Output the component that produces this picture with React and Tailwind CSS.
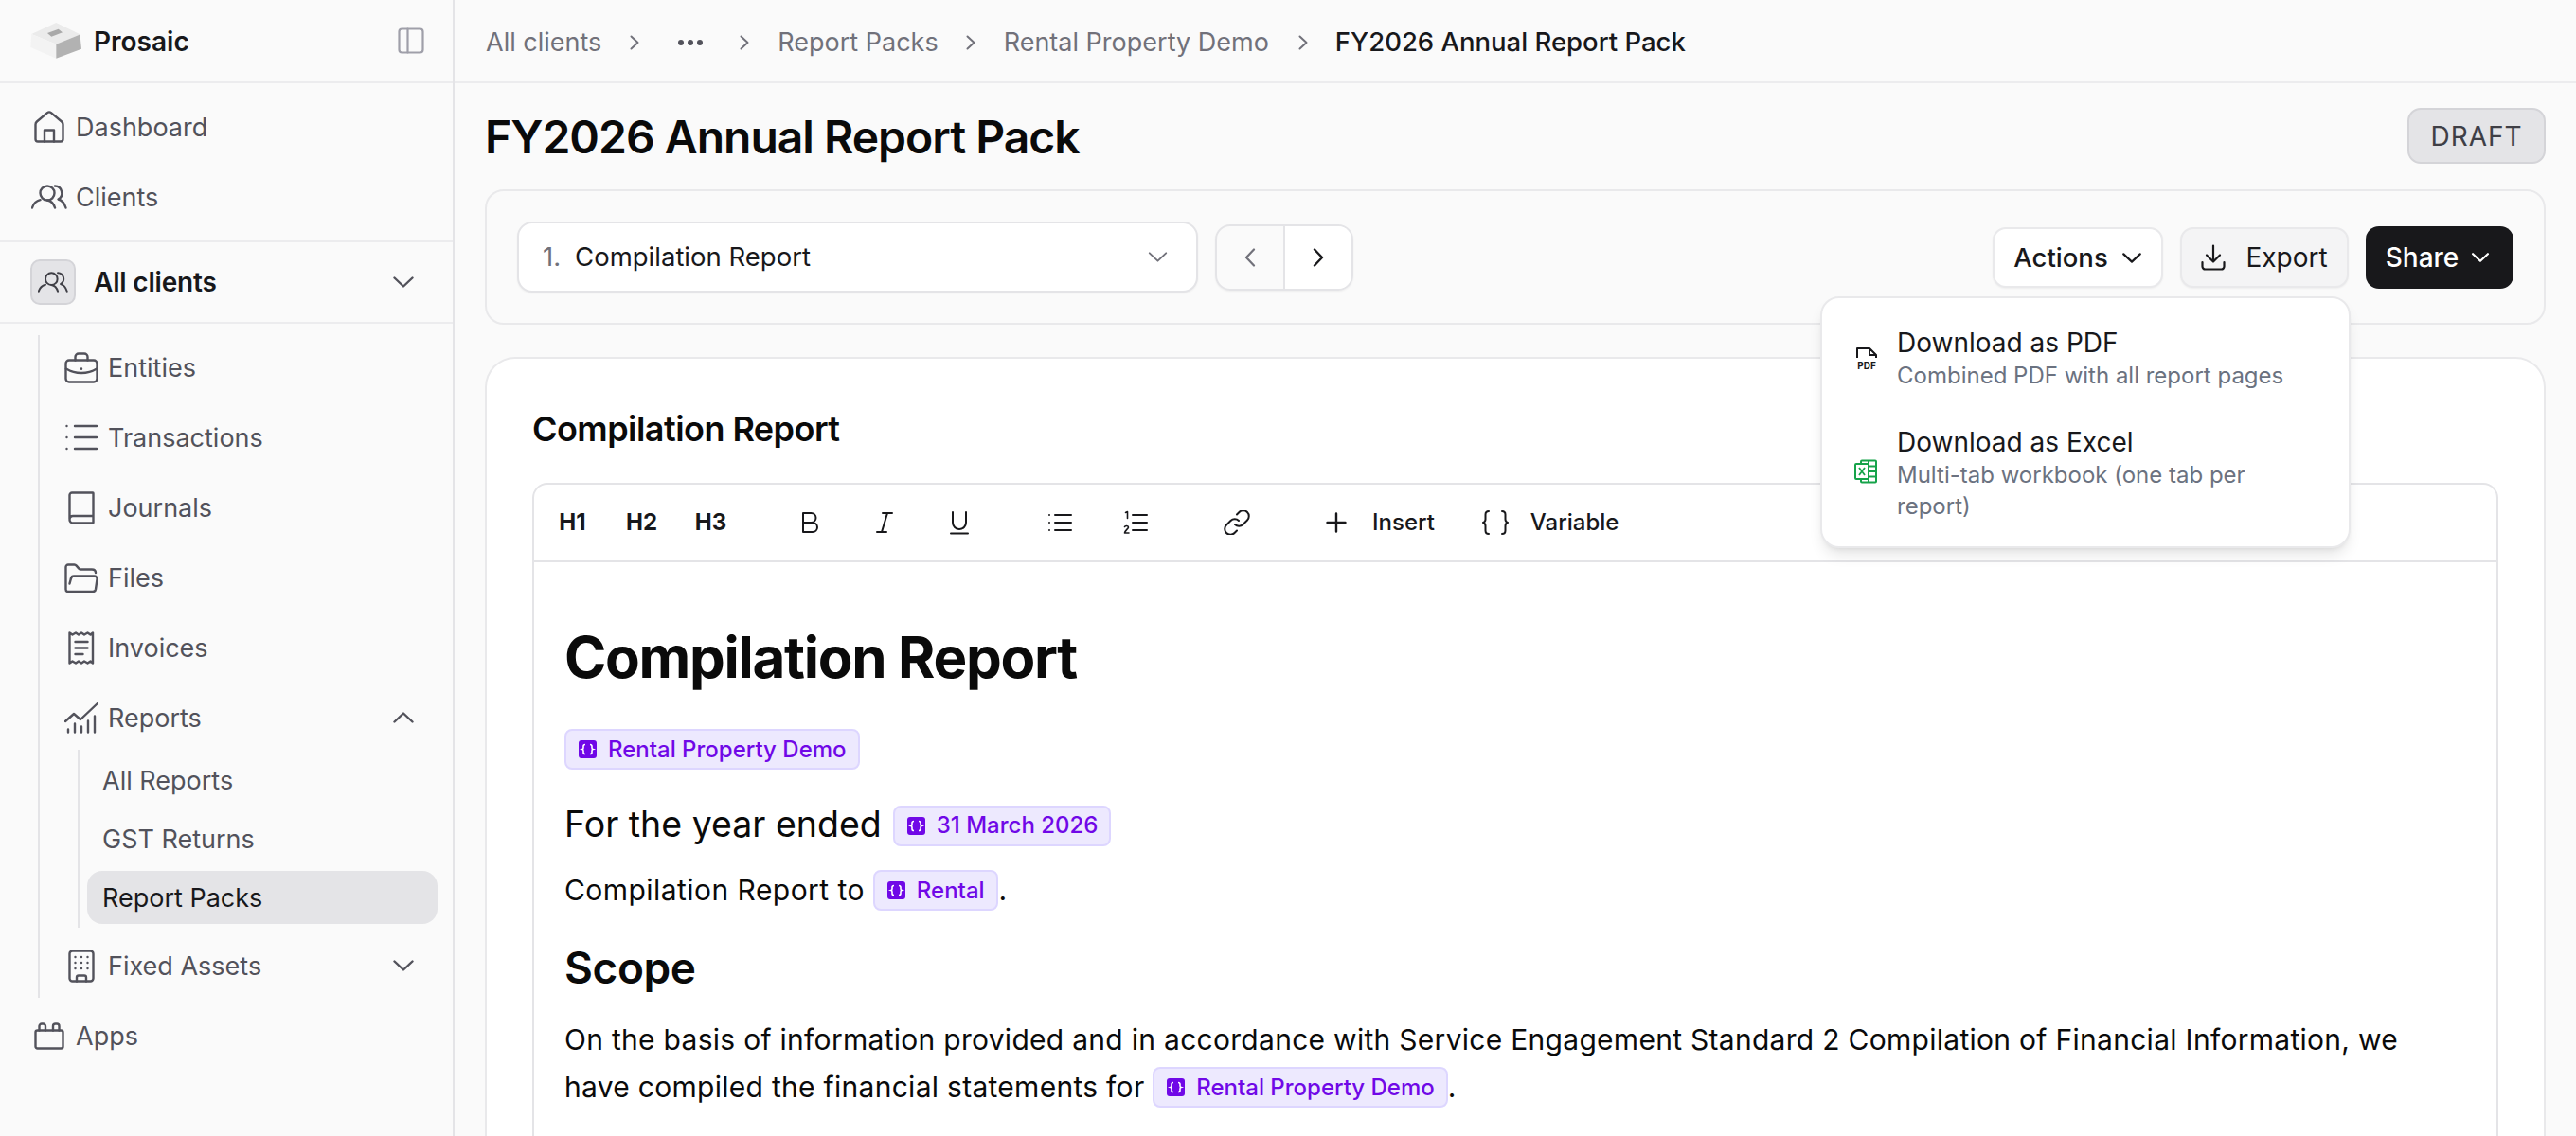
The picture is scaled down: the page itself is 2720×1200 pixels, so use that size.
const Ic = ({ w = 32, h = 32, sw = 2.4, children, className = '' }) => (
  <svg width={w} height={h} viewBox={`0 0 ${w} ${h}`} fill="none" stroke="currentColor" strokeWidth={sw} strokeLinecap="round" strokeLinejoin="round" className={`shrink-0 ${className}`}>
    {children}
  </svg>
);

const Logo = () => (
  <svg width="54" height="38" viewBox="0 0 54 38" className="shrink-0">
    <polygon points="27.3,0 1.3,12 27.3,22.7 53,12.5" fill="#ebebeb" />
    <polygon points="1.3,12 0.3,26 27.3,37.7 27.3,22.7" fill="#f3f3f3" />
    <polygon points="27.3,22.7 27.3,37.7 54,27.7 52.5,12.5" fill="#b2b2b2" />
    <polygon points="18,11 29.7,6.7 34,10.3 22.3,14.7" fill="#a9a9a9" />
  </svg>
);

const PanelIcon = () => (
  <Ic w={28} h={28} sw={2.2} className="text-zinc-400">
    <rect x="1.5" y="1.5" width="25" height="25" rx="3" />
    <path d="M10.5 1.5v25" />
  </Ic>
);

const HomeIcon = () => (
  <Ic w={32} h={34}>
    <path d="M1.5 14.5c0-1.2.5-2.2 1.4-3L14 2.200c1.200-1 2.800-1 4 0l11.100 9.300c.9.800 1.400 1.800 1.400 3V30a2.500 2.500 0 0 1-2.500 2.500H4A2.500 2.500 0 0 1 1.500 30z" />
    <path d="M11 32.500V20.500h10v12" />
  </Ic>
);

const UsersIcon = ({ w = 38, h = 26, sw = 2.4 }) => (
  <svg width={w} height={h} viewBox="0 0 38 26" fill="none" stroke="currentColor" strokeWidth={sw * (38 / w)} strokeLinecap="round" strokeLinejoin="round" className="shrink-0">
    <circle cx="17" cy="9" r="7.500" />
    <path d="M1 24.500c1.500-5 5-7.500 8.500-8.300M25 24.500c-1.500-5-5-7.500-8-8" />
    <path d="M25 1.500a7.500 7.500 0 0 1 3.500 14c3.500 1 6.500 4 8 9" />
  </svg>
);

const BriefcaseIcon = () => (
  <Ic w={36} h={33}>
    <rect x="1.500" y="8.500" width="33" height="23" rx="3.500" />
    <path d="M11.500 8.500V5a3.500 3.500 0 0 1 3.500-3.500h6A3.500 3.500 0 0 1 24.500 5v3.500" />
    <path d="M1.800 17.500c10 6 22.400 6 32.400 0" />
    <path d="M18 17.500v.2" />
  </Ic>
);

const ListIcon = () => (
  <Ic w={36} h={28}>
    <path d="M11 2h23M11 14h23M11 26h23" />
    <path d="M2.500 2v.1M2.500 14v.1M2.500 26v.1" />
  </Ic>
);

const BookIcon = () => (
  <Ic w={28} h={35}>
    <path d="M1.500 29V4A2.500 2.500 0 0 1 4 1.500h22a.5.5 0 0 1 .5.500v31a.5.5 0 0 1-.5.500H5A3.500 3.500 0 0 1 1.500 30c0-2.500 1.500-4 3.500-4h21.500" />
  </Ic>
);

const FolderIcon = () => (
  <Ic w={36} h={31}>
    <path d="M7 16c.3-1.500 1.200-2.500 3-2.500h21.500c2 0 3.300 1.500 3 3.500l-1.500 10.500c-.3 1.800-1.500 2.500-3 2.500H4A2.500 2.500 0 0 1 1.500 27.500V4A2.500 2.500 0 0 1 4 1.500h6.500c1 0 1.600.4 2.200 1.100l2.600 3c.6.6 1.200.9 2.200.900H29c2.500 0 4 1.500 4 3.500" />
    <path d="M7 16l-1.500 5.500" />
  </Ic>
);

const ReceiptIcon = () => (
  <Ic w={28} h={35}>
    <path d="M1.500 1.500l3 2 3.500-2 3 2 3-2 3 2 3.500-2 3 2 2.500-2v32l-2.500-2-3 2-3.500-2-3 2-3-2-3 2-3.500-2-3 2z" />
    <path d="M7.500 11h13M7.500 17.500h13M7.500 24h8" />
  </Ic>
);

const ChartIcon = () => (
  <Ic w={36} h={33}>
    <path d="M1 20l9-8 7 6L35 1" />
    <path d="M4 31.500v-3M11 31.500v-9M18 31.500v-6M25 31.500v-12M32 31.500v-17" />
  </Ic>
);

const BuildingIcon = () => (
  <Ic w={28} h={35}>
    <rect x="1.500" y="1.500" width="25" height="32" rx="3" />
    <path d="M9 33.500v-4a2 2 0 0 1 2-2h6a2 2 0 0 1 2 2v4" />
    <path d="M7.500 8v.1M14 8v.1M20.500 8v.1M7.500 14v.1M14 14v.1M20.500 14v.1M7.500 20v.1M14 20v.1M20.500 20v.1" />
  </Ic>
);

const AppsIcon = () => (
  <Ic w={32} h={29}>
    <rect x="1.500" y="8.500" width="29" height="19" rx="2" />
    <path d="M5.500 8.500V4a2.500 2.500 0 0 1 2.500-2.500h1.500A2.500 2.500 0 0 1 12 4v4.500M20 8.500V4a2.500 2.500 0 0 1 2.500-2.500H24A2.500 2.500 0 0 1 26.500 4v4.500" />
  </Ic>
);

const Chevron = ({ up = false, w = 22, h = 12, sw = 2.4, className = '' }) => (
  <svg width={w} height={h} viewBox="0 0 22 12" fill="none" stroke="currentColor" strokeWidth={sw * (22 / w)} strokeLinecap="round" strokeLinejoin="round" className={`shrink-0 ${className}`}>
    <path d={up ? 'M1.500 10.500L11 1.500l9.500 9' : 'M1.500 1.500L11 10.500l9.500-9'} />
  </svg>
);

const Slash = () => (
  <svg width="10" height="16" viewBox="0 0 10 16" fill="none" stroke="#71717a" strokeWidth="2" strokeLinecap="round" strokeLinejoin="round" className="shrink-0">
    <path d="M1.500 1.500L8.500 8l-7 6.500" />
  </svg>
);

const NavRow = ({ icon, label }) => (
  <div className="flex h-[68px] items-center gap-[9px] pl-[33px] text-[#52525b]">
    <div className="flex w-[38px] justify-center">{icon}</div>
    <span className="pt-[2px]">{label}</span>
  </div>
);

const SubRow = ({ icon, label, chevron }) => (
  <div className="flex h-[68px] items-center gap-[10px] pl-[26px] pr-[41px] text-[#52525b]">
    <div className="flex w-[36px] justify-center">{icon}</div>
    <span className="flex-1 pt-[2px]">{label}</span>
    {chevron}
  </div>
);

const Sidebar = () => (
  <aside className="flex w-[480px] shrink-0 flex-col border-r-2 border-[#e4e4e7] text-[27px]">
    <div className="flex h-[88px] shrink-0 items-center border-b-2 border-[#ececee] pl-[32px] pr-[30px]">
      <Logo />
      <span className="ml-[13px] flex-1 pt-[2px] text-[28px] font-semibold text-[#18181b]">Prosaic</span>
      <PanelIcon />
    </div>
    <div className="flex flex-col gap-[6px] border-b-2 border-[#ececee] pb-[12px] pt-[12px]">
      <NavRow icon={<HomeIcon />} label="Dashboard" />
      <NavRow icon={<UsersIcon />} label="Clients" />
    </div>
    <div className="flex h-[86px] shrink-0 items-center border-b-2 border-[#ececee] pl-[32px] pr-[41px]">
      <div className="flex size-[48px] items-center justify-center rounded-[10px] border-2 border-[#d4d4d8] bg-[#e4e4e7] text-[#3f3f46]">
        <UsersIcon w={32} h={22} sw={2} />
      </div>
      <span className="ml-[19px] flex-1 text-[28px] font-semibold tracking-[-0.2px] text-[#18181b]">All clients</span>
      <Chevron className="text-[#52525b]" />
    </div>
    <div className="ml-[40px] mt-[12px] flex flex-col gap-[6px] border-l-2 border-[#e4e4e7]">
      <SubRow icon={<BriefcaseIcon />} label="Entities" />
      <SubRow icon={<ListIcon />} label="Transactions" />
      <SubRow icon={<BookIcon />} label="Journals" />
      <SubRow icon={<FolderIcon />} label="Files" />
      <SubRow icon={<ReceiptIcon />} label="Invoices" />
      <div>
        <SubRow icon={<ChartIcon />} label="Reports" chevron={<Chevron up className="text-[#52525b]" />} />
        <div className="ml-[40px] mr-[16px] flex flex-col gap-[6px] border-l-2 border-[#e4e4e7] py-[4px] pl-[8px] text-[#52525b]">
          <div className="flex h-[56px] items-center px-[16px] pt-[2px]">All Reports</div>
          <div className="flex h-[56px] items-center px-[16px] pt-[2px]">GST Returns</div>
          <div className="flex h-[56px] items-center rounded-[16px] bg-[#e4e4e7] px-[16px] pt-[2px] text-[#18181b]">Report Packs</div>
        </div>
      </div>
      <SubRow icon={<BuildingIcon />} label="Fixed Assets" chevron={<Chevron className="text-[#52525b]" />} />
    </div>
    <div className="mt-[6px]">
      <NavRow icon={<AppsIcon />} label="Apps" />
    </div>
  </aside>
);

const Breadcrumb = () => (
  <div className="flex h-[88px] shrink-0 items-center border-b-2 border-[#ececee] pl-[33px] pt-[4px] text-[27px] text-[#71717a]">
    <span>All clients</span>
    <span className="ml-[30px]"><Slash /></span>
    <span className="ml-[41px] flex gap-[4px]">
      <i className="size-[6px] rounded-full bg-[#52525b]" />
      <i className="size-[6px] rounded-full bg-[#52525b]" />
      <i className="size-[6px] rounded-full bg-[#52525b]" />
    </span>
    <span className="ml-[39px]"><Slash /></span>
    <span className="ml-[30px]">Report Packs</span>
    <span className="ml-[29px]"><Slash /></span>
    <span className="ml-[30px]">Rental Property Demo</span>
    <span className="ml-[31px]"><Slash /></span>
    <span className="ml-[29px] text-[27.5px] font-medium text-[#18181b]">FY2026 Annual Report Pack</span>
  </div>
);

const Toolbar = () => (
  <div className="relative flex h-[143px] items-center rounded-[20px] border-2 border-[#e9e9eb] px-[32px]">
    <div className="flex h-[75px] w-[719px] items-center rounded-[16px] border-2 border-[#e4e4e7] bg-white pl-[25px] pr-[30px] text-[27.5px] shadow-xs">
      <span className="text-[#71717a]">1.</span>
      <span className="ml-[15px] flex-1 text-[#18181b]">Compilation Report</span>
      <Chevron w={21} h={11} sw={2} className="text-[#71717a]" />
    </div>
    <div className="ml-[18px] flex h-[70px] w-[146px] items-stretch rounded-[16px] border-2 border-[#e4e4e7] shadow-xs">
      <div className="flex flex-1 items-center justify-center border-r-2 border-[#e4e4e7] text-[#71717a]">
        <svg width="12" height="20" viewBox="0 0 12 20" fill="none" stroke="currentColor" strokeWidth="2.200" strokeLinecap="round" strokeLinejoin="round"><path d="M10 1.500L2 10l8 8.500" /></svg>
      </div>
      <div className="flex flex-1 items-center justify-center bg-white rounded-r-[14px] text-[#18181b]">
        <svg width="12" height="20" viewBox="0 0 12 20" fill="none" stroke="currentColor" strokeWidth="2.400" strokeLinecap="round" strokeLinejoin="round"><path d="M2 1.500L10 10l-8 8.500" /></svg>
      </div>
    </div>
    <div className="ml-auto flex items-center gap-[18px] text-[27.5px] font-medium">
      <div className="flex h-[64px] w-[180px] items-center justify-center gap-[14px] rounded-[14px] border-2 border-[#e9e9eb] bg-white pt-[2px] text-[#18181b] shadow-xs">
        Actions
        <Chevron w={22} h={11} className="text-[#18181b]" />
      </div>
      <div className="flex h-[64px] w-[178px] items-center justify-center gap-[21px] rounded-[14px] border-2 border-[#e9e9eb] bg-[#f4f4f5] text-[28px] font-normal text-[#18181b] shadow-xs">
        <Ic w={26} h={28} sw={2.200}>
          <path d="M13 1.500V18M6 11.500l7 7 7-7" />
          <path d="M1.500 19v4.500a3 3 0 0 0 3 3h17a3 3 0 0 0 3-3V19" />
        </Ic>
        Export
      </div>
      <div className="flex h-[66px] w-[156px] items-center justify-center gap-[13px] rounded-[14px] bg-[#18181b] pr-[4px] text-[28px] text-white">
        Share
        <Chevron w={20} h={10} className="text-white" />
      </div>
    </div>
    <div className="absolute left-[1408px] top-[111px] z-10 h-[266px] w-[560px] rounded-[20px] border-2 border-[#e9e9eb] bg-white pt-[29px] shadow-lg">
      <div className="flex items-center pl-[35px]">
        <svg width="24" height="26" viewBox="0 0 24 26" className="shrink-0 text-[#18181b]">
          <path d="M2 12V2h13l7 7v3M15 2v7h7" fill="none" stroke="currentColor" strokeWidth="2" strokeLinejoin="round" />
          <text x="12" y="24" textAnchor="middle" fontFamily="Inter" fontSize="10" fontWeight="700" fill="currentColor">PDF</text>
        </svg>
        <div className="ml-[20px]">
          <div className="text-[28px] leading-[36px] text-[#18181b]">Download as PDF</div>
          <div className="text-[24px] leading-[34px] text-[#6b7280]">Combined PDF with all report pages</div>
        </div>
      </div>
      <div className="mt-[35px] flex items-center pl-[34px]">
        <svg width="24" height="26" viewBox="0 0 24 26" fill="none" stroke="#16a34a" strokeWidth="2" strokeLinejoin="round" className="mt-[-4px] shrink-0">
          <path d="M7 5V2.500a1 1 0 0 1 1-1h14a1 1 0 0 1 1 1v21a1 1 0 0 1-1 1H8a1 1 0 0 1-1-1V21" />
          <rect x="1" y="5" width="14" height="16" rx="1" />
          <path d="M15 7.500h8M15 13h8M15 18.500h8M15 1.500v23" />
          <path d="M5 9l6 8M11 9l-6 8" strokeWidth="1.800" />
        </svg>
        <div className="ml-[21px] w-[480px]">
          <div className="text-[28px] leading-[36px] text-[#18181b]">Download as Excel</div>
          <div className="text-[24px] leading-[33px] text-[#6b7280]">Multi-tab workbook (one tab per<br />report)</div>
        </div>
      </div>
    </div>
  </div>
);

const Chip = ({ children }) => (
  <span className="inline-flex h-[43px] items-center gap-[12px] rounded-[8px] border-2 border-violet-200 bg-violet-100 pl-[13px] pr-[12px] align-[1px] text-[24px] font-medium leading-none tracking-normal text-violet-700">
    <svg width="19" height="19" viewBox="0 0 19 19" className="shrink-0">
      <rect width="19" height="19" rx="3" fill="currentColor" />
      <path d="M7 4.500c-1.500 0-2 .5-2 1.800v1.700c0 .8-.5 1.300-1.200 1.500.7.200 1.200.7 1.200 1.500v1.700c0 1.300.5 1.800 2 1.800M12 4.500c1.500 0 2 .5 2 1.800v1.700c0 .8.5 1.300 1.200 1.500-.7.200-1.200.7-1.200 1.500v1.700c0 1.300-.5 1.800-2 1.800" fill="none" stroke="#fff" strokeWidth="1.600" />
    </svg>
    {children}
  </span>
);

const EditorToolbar = () => {
  const cell = 'flex h-[48px] items-center justify-center text-[#18181b]';
  return (
    <div className="flex h-[82px] shrink-0 items-center border-b-2 border-[#e4e4e7] px-[4px] text-[24px] font-medium text-[#18181b]">
      <div className={`${cell} w-[73px] font-bold`}>H1</div>
      <div className={`${cell} w-[73px] font-bold`}>H2</div>
      <div className={`${cell} w-[73px] font-bold`}>H3</div>
      <div className={`${cell} ml-[28px] w-[79px]`}>
        <Ic w={20} h={24} sw={2}><path d="M3 2h8.500a5 5 0 0 1 0 10H3zM3 12h10a5 5 0 0 1 0 10H3z" /></Ic>
      </div>
      <div className={`${cell} w-[79px]`}>
        <Ic w={20} h={24} sw={2}><path d="M8 2h10M2 22h10M13 2L7 22" /></Ic>
      </div>
      <div className={`${cell} w-[79px]`}>
        <Ic w={20} h={26} sw={2}><path d="M3 2v11a7 7 0 0 0 14 0V2M1 24.500h18" /></Ic>
      </div>
      <div className={`${cell} ml-[27px] w-[80px]`}>
        <Ic w={26} h={22} sw={2}><path d="M8 3h17M8 11h17M8 19h17M2 3v.1M2 11v.1M2 19v.1" /></Ic>
      </div>
      <div className={`${cell} w-[80px]`}>
        <Ic w={26} h={26} sw={2}>
          <path d="M10 5h15M10 13h15M10 21h15" />
          <path d="M2.500 2.500L4.500 1.500v7M1.500 17.500c.5-1.500 4-1.500 4 .5 0 1.500-3.500 3-4 6h4.500" strokeWidth="1.600" />
        </Ic>
      </div>
      <div className={`${cell} ml-[27px] w-[80px]`}>
        <Ic w={28} h={26} sw={2}>
          <path d="M12 15a6 6 0 0 0 8.500 0l4.500-4.500a6 6 0 0 0-8.500-8.500l-2.500 2.500" />
          <path d="M16 11a6 6 0 0 0-8.500 0l-4.500 4.500a6 6 0 0 0 8.500 8.500l2.500-2.500" />
        </Ic>
      </div>
      <div className={`${cell} ml-[54px] gap-[27px]`}>
        <Ic w={22} h={22} sw={2.400}><path d="M11 1.500v19M1.500 11h19" /></Ic>
        Insert
      </div>
      <div className={`${cell} ml-[50px] gap-[23px]`}>
        <Ic w={28} h={28} sw={2}>
          <path d="M7 2c-3 0-3.500 1.500-3.500 3.500v5c0 2-.8 3-2.500 3.500 1.700.5 2.500 1.500 2.500 3.500v5c0 2 .5 3.500 3.500 3.500M21 2c3 0 3.500 1.500 3.500 3.500v5c0 2 .8 3 2.500 3.500-1.700.5-2.500 1.500-2.500 3.500v5c0 2-.5 3.500-3.500 3.500" />
        </Ic>
        Variable
      </div>
    </div>
  );
};

const Editor = () => (
  <div className="flex-1 rounded-t-[16px] border-x-2 border-t-2 border-[#e4e4e7]">
    <EditorToolbar />
    <div className="px-[32px] pt-[64px] text-[#0a0a0a]">
      <h1 className="text-[60px] font-bold leading-[72px] tracking-[-1.3px]">Compilation Report</h1>
      <div className="mt-[40px] h-[43px]"><Chip>Rental Property Demo</Chip></div>
      <div className="mt-[36px] flex h-[43px] items-center text-[37.5px] leading-[43px]">
        For the year ended
        <span className="ml-[12px]"><Chip>31 March 2026</Chip></span>
      </div>
      <div className="mt-[27px] flex h-[43px] items-center text-[30px] tracking-[0.45px]">
        Compilation Report to
        <span className="ml-[9px]"><Chip>Rental</Chip></span>
        <span className="ml-[1px]">.</span>
      </div>
      <h2 className="mt-[31px] text-[46px] font-semibold leading-[58px] tracking-[-0.4px]">Scope</h2>
      <p className="mt-[22px] pr-[60px] text-[30px] leading-[50px] tracking-[0.285px]">
        On the basis of information provided and in accordance with Service Engagement Standard 2 Compilation of Financial Information, we have compiled the financial statements for <Chip>Rental Property Demo</Chip>.
      </p>
    </div>
  </div>
);

export default function App() {
  return (
    <div className="flex h-[1200px] w-[2720px] overflow-hidden bg-[#fafafa] font-['Inter',sans-serif]">
      <Sidebar />
      <main className="flex min-w-0 flex-1 flex-col">
        <Breadcrumb />
        <div className="flex flex-1 flex-col px-[32px]">
          <div className="mb-[27px] mt-[26px] flex h-[59px] items-center justify-between">
            <h1 className="pt-[2px] text-[48px] font-semibold tracking-[-1px] text-[#0a0a0a]">FY2026 Annual Report Pack</h1>
            <span className="flex h-[59px] w-[146px] items-center justify-center rounded-[14px] border-2 border-[#d4d4d8] bg-[#e4e4e7] text-[28px] tracking-[1px] text-[#3f3f46]">DRAFT</span>
          </div>
          <Toolbar />
          <section className="mt-[34px] flex flex-1 flex-col rounded-t-[32px] border-x-2 border-t-2 border-[#e9e9eb] bg-white px-[48px] pt-[48px]">
            <h2 className="mb-[31px] text-[36px] font-semibold leading-[52px] tracking-[-0.55px] text-[#0a0a0a]">Compilation Report</h2>
            <Editor />
          </section>
        </div>
      </main>
    </div>
  );
}
